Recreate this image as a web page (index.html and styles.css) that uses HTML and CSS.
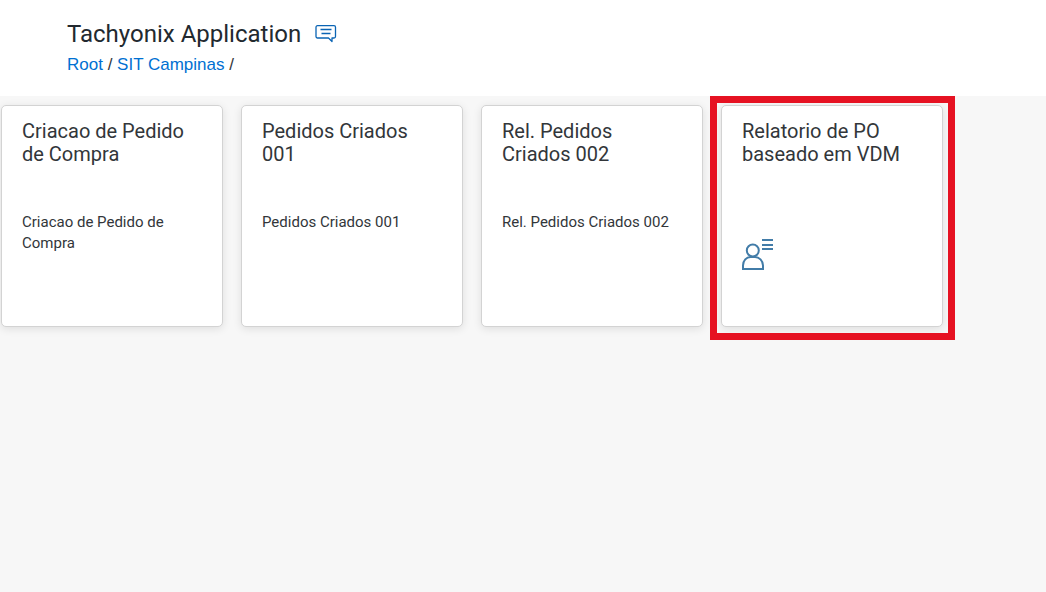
FILE: index.html
```html
<!DOCTYPE html>
<html lang="pt">
<head>
    <meta charset="utf-8">
    <title>Tachyonix Application</title>
    <link rel="stylesheet" href="styles.css">
</head>
<body>
    <header>
        <h1>Tachyonix Application
            <button class="comment-button" aria-label="Comments">
                <svg width="22" height="18" viewBox="0 0 22 18" fill="none" stroke="#0a64b4" stroke-width="1.3" stroke-linejoin="round">
                    <path d="M2.500 .7h16.500a1.500 1.500 0 0 1 1.500 1.500v9.300a1.500 1.500 0 0 1-1.500 1.500H17v3.500l-3.500-3.500H2.500A1.500 1.500 0 0 1 1 11.500V2.200A1.500 1.500 0 0 1 2.500 .7z"/>
                    <path d="M5.500 4.500h11M6.500 8.500h9"/>
                </svg>
            </button>
        </h1>
        <nav>
            <a href="#">Root</a> / <a href="#">SIT Campinas</a> /
        </nav>
    </header>

    <main>
        <div class="tile-slot">
            <a href="#" class="tile">
                <h2>Criacao de Pedido de Compra</h2>
                <p>Criacao de Pedido de Compra</p>
            </a>
        </div>
        <div class="tile-slot">
            <a href="#" class="tile">
                <h2>Pedidos Criados 001</h2>
                <p>Pedidos Criados 001</p>
            </a>
        </div>
        <div class="tile-slot">
            <a href="#" class="tile">
                <h2>Rel. Pedidos Criados 002</h2>
                <p>Rel. Pedidos Criados 002</p>
            </a>
        </div>
        <div class="tile-slot highlight">
            <a href="#" class="tile">
                <h2>Relatorio de PO baseado em VDM</h2>
                <svg class="tile-icon" width="32" height="32" viewBox="0 0 32 32" fill="none" stroke="#427ca8" stroke-width="2">
                    <circle cx="10.800" cy="12.500" r="6"/>
                    <path d="M1 31v-3.500c0-5 3.500-8.500 7.500-8.500h4.500c4 0 8 3.500 8 8.500v3.500z"/>
                    <path d="M20 2h11M20 7h11M20 11h11"/>
                </svg>
            </a>
        </div>
    </main>
</body>
</html>
```
FILE: styles.css
```css
* {
    margin: 0;
    padding: 0;
    box-sizing: border-box;
}

body {
    background: #f7f7f7;
    color: #32363a;
    font-family: Roboto, sans-serif;
}

header {
    background: #fff;
    padding: 18px 67px 16px;
}

h1 {
    display: flex;
    align-items: center;
    gap: 14px;
    color: #22292f;
    font-size: 24px;
    font-weight: 400;
    line-height: 32px;
}

.comment-button {
    display: flex;
    background: none;
    border: none;
    cursor: pointer;
}

nav {
    font-family: "Liberation Sans", sans-serif;
    font-size: 17px;
    line-height: 30px;
}

nav a {
    color: #0070d2;
    text-decoration: none;
}

main {
    display: flex;
    flex-wrap: wrap;
}

.tile-slot {
    width: 240px;
    padding: 9px 17px 13px 1px;
}

.tile {
    display: block;
    min-height: 222px;
    padding: 14px 20px;
    background: #fff;
    border: 1px solid #d3d3d3;
    border-radius: 5px;
    box-shadow: 0 2px 8px rgba(0, 0, 0, 0.1);
    color: #32363a;
    text-decoration: none;
}

h2 {
    font-size: 20px;
    font-weight: 400;
    line-height: 23px;
}

.tile p {
    margin-top: 46px;
    font-size: 15px;
    line-height: 21px;
}

.tile-icon {
    display: block;
    margin-top: 72px;
}

.highlight {
    position: relative;
}

/* red frame drawn over the tile */
.highlight::after {
    content: "";
    position: absolute;
    top: 0;
    right: 5px;
    bottom: 0;
    left: -10px;
    border: 7px solid #e61222;
    pointer-events: none;
}
```
